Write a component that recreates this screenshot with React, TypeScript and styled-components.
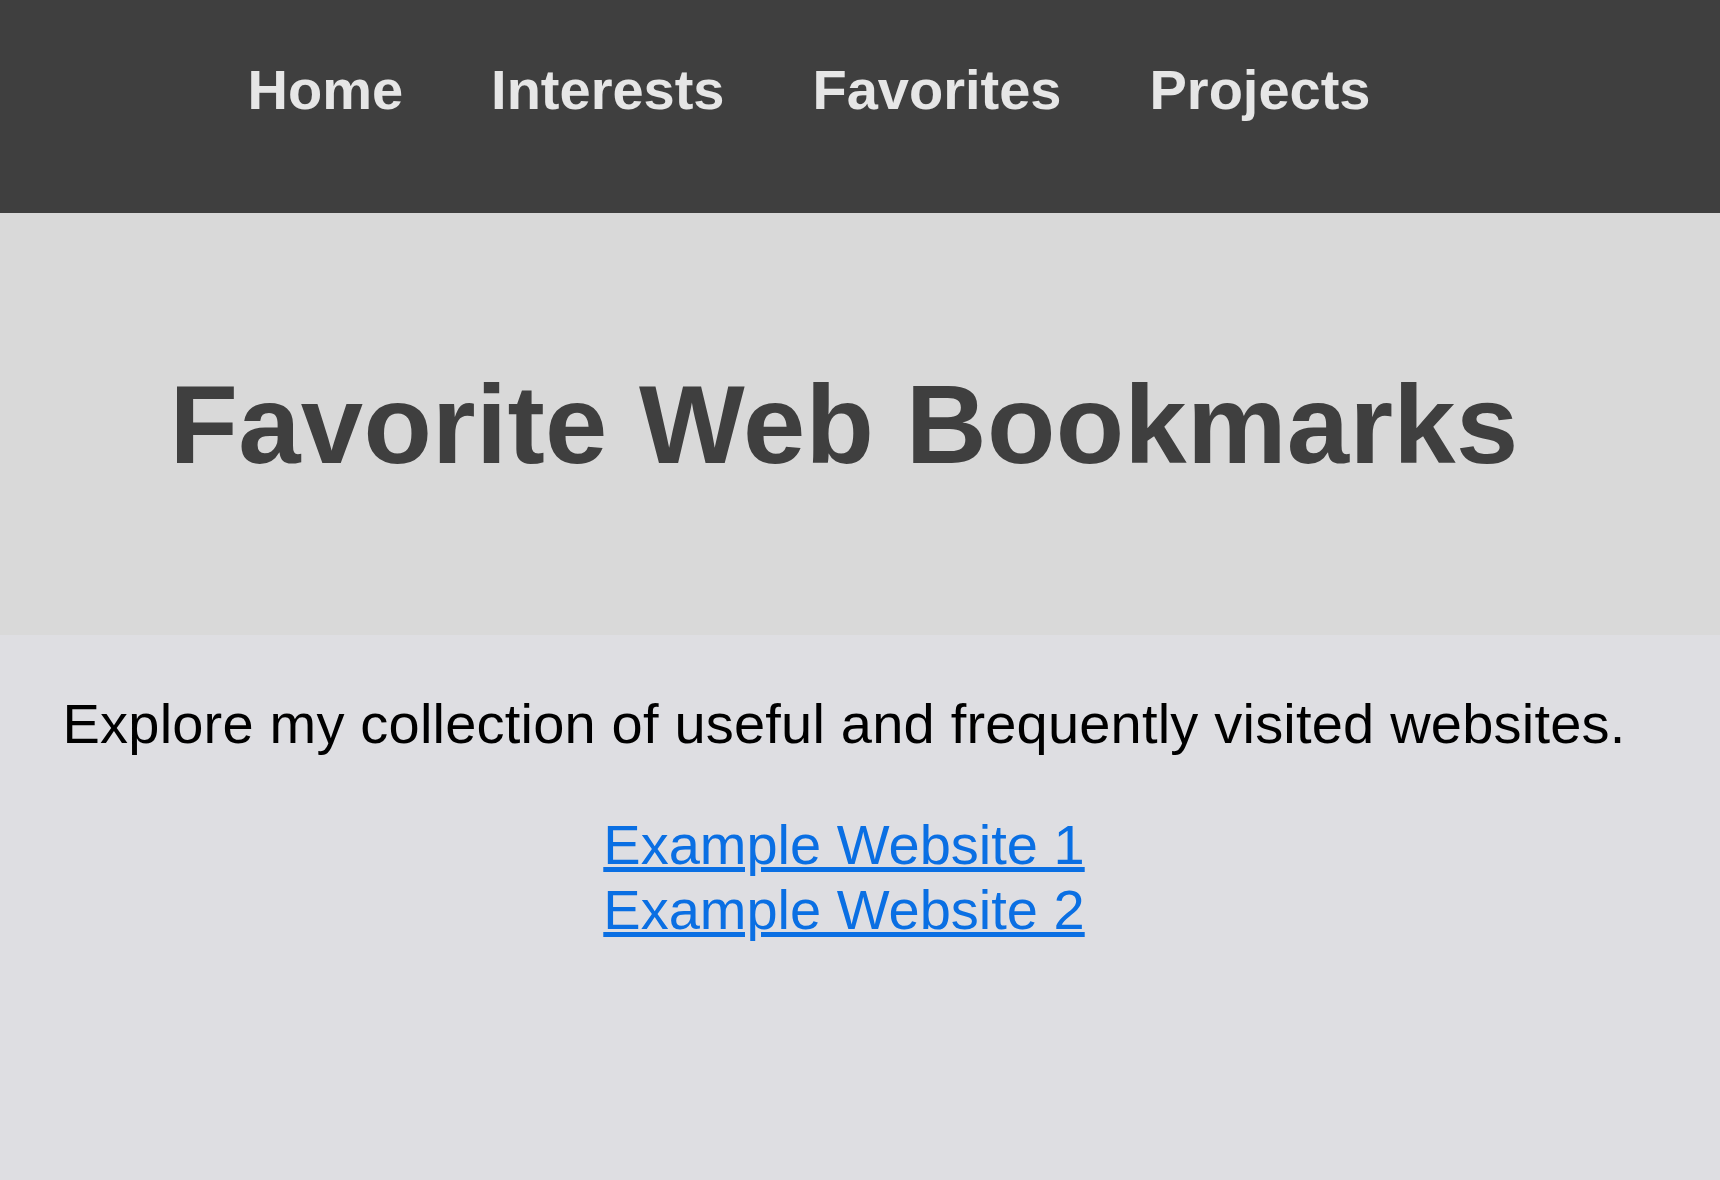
import React from "react";
import styled, { createGlobalStyle } from "styled-components";

const GlobalStyle = createGlobalStyle`
  html, body {
    margin: 0;
    padding: 0;
    background: #dedee2;
  }
  body {
    font-family: "Liberation Sans", Arial, sans-serif;
  }
`;

const Page = styled.div`
  min-height: 1180px;
  display: flex;
  flex-direction: column;
  background: #dedee2;
`;

const NavBar = styled.nav`
  box-sizing: border-box;
  height: 213px;
  padding: 57px 102px 0 0;
  background: #3f3f3f;
`;

const NavList = styled.ul`
  list-style: none;
  margin: 0;
  padding: 0;
  display: flex;
  justify-content: center;
  gap: 88px;
`;

const NavItem = styled.li`
  font-size: 56px;
  font-weight: 700;
  line-height: normal;
  color: #e6e6e6;
`;

const Hero = styled.header`
  box-sizing: border-box;
  height: 422px;
  padding-right: 32px;
  display: flex;
  align-items: center;
  justify-content: center;
  background: #d9d9d9;
`;

const Title = styled.h1`
  margin: 0;
  font-size: 112px;
  font-weight: 700;
  line-height: normal;
  letter-spacing: 0.3px;
  color: #3f3f3f;
`;

const Main = styled.main`
  flex: 1;
  padding: 56px 32px 0 0;
  text-align: center;
  font-size: 56px;
  line-height: normal;
  color: #000;
`;

const Intro = styled.p`
  margin: 0 0 56px;
  letter-spacing: 0.2px;
`;

const LinkList = styled.div`
  display: flex;
  flex-direction: column;
  align-items: center;
`;

const Bookmark = styled.a`
  color: #0a6fe3;
  text-decoration: underline;
`;

const navItems = ["Home", "Interests", "Favorites", "Projects"];
const bookmarks = ["Example Website 1", "Example Website 2"];

export default function App() {
  return (
    <Page>
      <GlobalStyle />
      <NavBar>
        <NavList>
          {navItems.map((item) => (
            <NavItem key={item}>{item}</NavItem>
          ))}
        </NavList>
      </NavBar>
      <Hero>
        <Title>Favorite Web Bookmarks</Title>
      </Hero>
      <Main>
        <Intro>Explore my collection of useful and frequently visited websites.</Intro>
        <LinkList>
          {bookmarks.map((b) => (
            <Bookmark key={b} href="#">
              {b}
            </Bookmark>
          ))}
        </LinkList>
      </Main>
    </Page>
  );
}
